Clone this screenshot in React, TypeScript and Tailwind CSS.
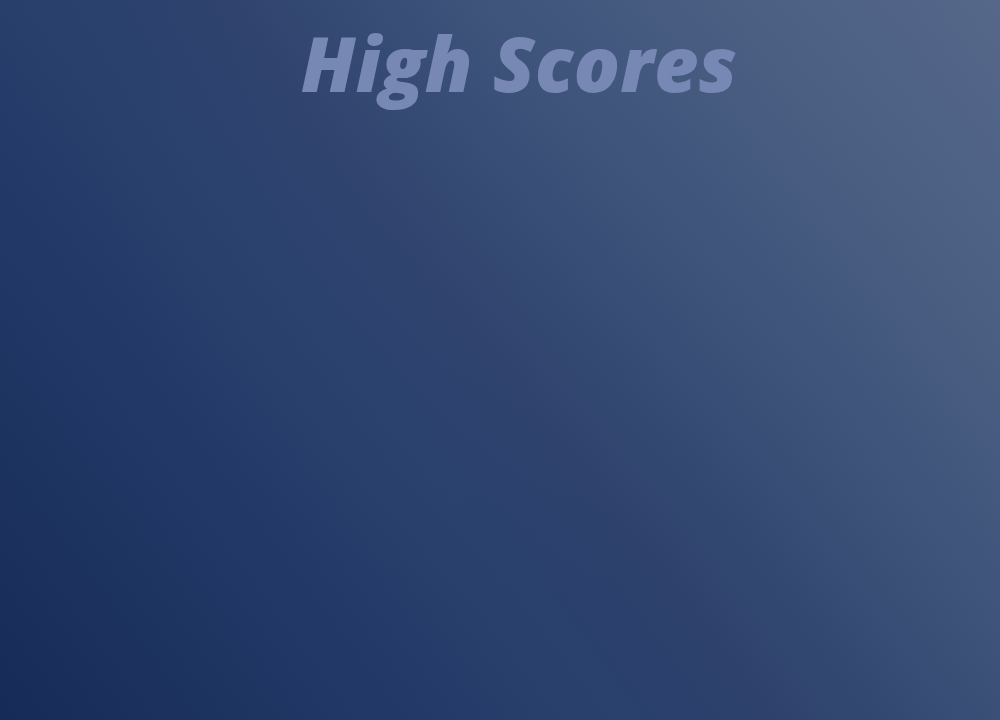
export default function App() {
  return (
    <div className="relative h-[720px] w-[1000px] overflow-hidden bg-[linear-gradient(53deg,#162b57_0%,#223866_25%,#2a406d_40%,#2d416c_50%,#3a5077_65%,#4a5e82_82%,#55688a_100%)]">
      <div className="pointer-events-none absolute inset-0 bg-[radial-gradient(ellipse_at_50%_0%,rgba(90,110,150,0.1),transparent_60%)]" />
      <div className="relative flex justify-center pt-[24px] pl-[38px]">
        <h1 className="font-['Open_Sans','Lato',sans-serif] text-[77px] leading-none font-extrabold italic text-[#7888b4]">
          High Scores
        </h1>
      </div>
    </div>
  )
}
